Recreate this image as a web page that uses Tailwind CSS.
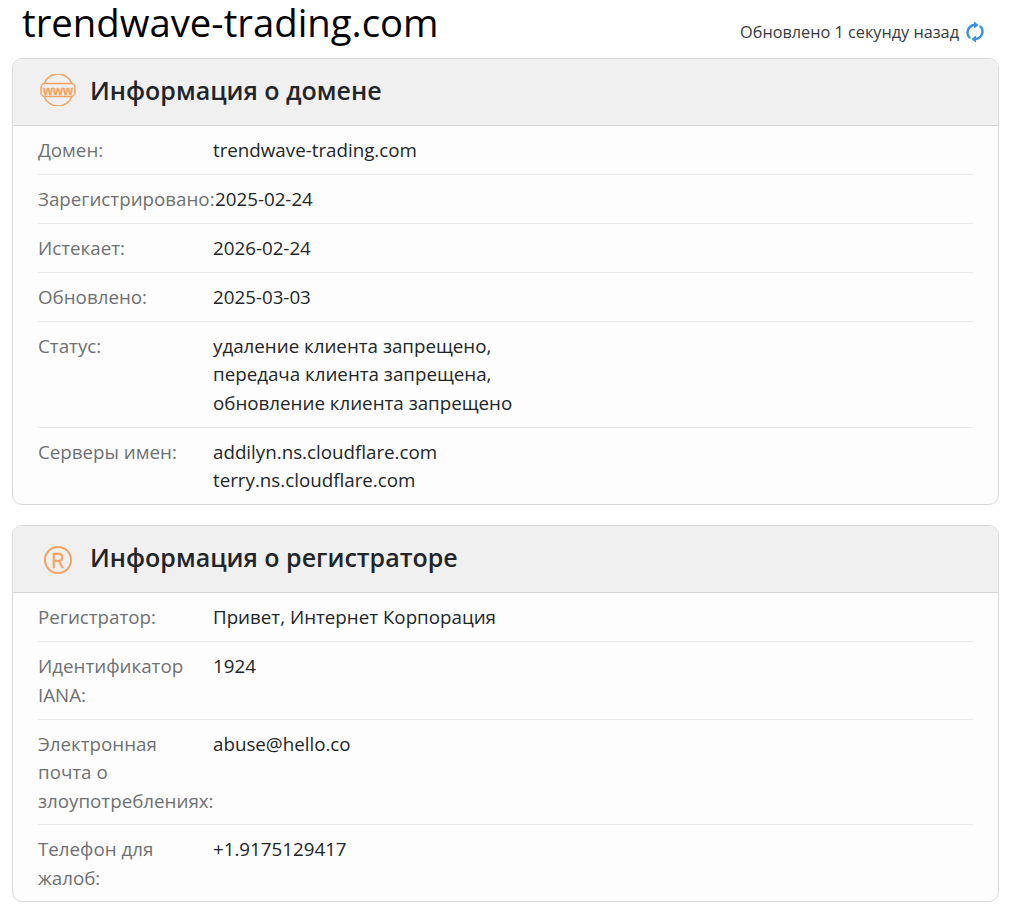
<!DOCTYPE html>
<html lang="ru">
<head>
    <meta charset="UTF-8">
    <meta name="viewport" content="width=device-width, initial-scale=1.0">
    <title>trendwave-trading.com</title>
    <script src="https://cdn.jsdelivr.net/npm/@tailwindcss/browser@4"></script>
</head>
<body class="bg-white text-[#212529] font-['Open_Sans','Noto_Sans',sans-serif] overflow-hidden">
    <div class="pl-3 pr-[10px]">
        <!-- Заголовок -->
        <div class="flex items-end justify-between h-[58px] pb-[14px]">
            <h1 class="pl-[10px] text-[38.3px] leading-[44px] text-black font-normal">trendwave-trading.com</h1>
            <div class="flex items-center gap-[5px] pr-[13px] text-[16.25px] leading-6 text-[#343a40]">
                <span>Обновлено 1 секунду назад</span>
                <svg class="w-[22px] h-[22px] text-[#3d8fe0]" viewBox="0 0 22 22" fill="none" stroke="currentColor" stroke-width="2.400" stroke-linecap="round" stroke-linejoin="round">
                    <path d="M11 4a7.500 7.500 0 0 0-5.500 12.500"/>
                    <path d="M11 18a7.500 7.500 0 0 0 5.500-12.500"/>
                    <path d="M10.500 1.500l3 2.500-3 2.500z" fill="currentColor" stroke-width="1.200"/>
                    <path d="M11.500 20.500l-3-2.500 3-2.500z" fill="currentColor" stroke-width="1.200"/>
                </svg>
            </div>
        </div>

        <!-- Информация о домене -->
        <section class="border border-[#d9d9d9] rounded-[10px] bg-[#fdfdfd] overflow-hidden">
            <div class="flex items-center h-[67px] bg-[#f0f0f0] border-b border-[#d4d4d4]">
                <svg class="w-[36px] h-[32px] ml-[27px] mb-[5px] text-[#f4a261]" viewBox="0 0 36 32" fill="none" stroke="currentColor" stroke-width="1.500">
                    <path d="M4 9.500a15 15 0 0 1 28 0"/>
                    <path d="M4 22.500a15 15 0 0 0 28 0"/>
                    <rect x="1" y="9.500" width="34" height="13" rx="4"/>
                    <text x="18" y="20.500" text-anchor="middle" font-family="Liberation Sans" font-weight="700" font-size="13" textLength="30" lengthAdjust="spacingAndGlyphs" fill="currentColor" stroke="currentColor" stroke-width="0.300">www</text>
                </svg>
                <h2 class="ml-[14px] mb-[5px] text-[25px] leading-8 font-semibold text-[#212529]">Информация о домене</h2>
            </div>
            <div class="px-[25px]">
                <div class="flex border-b border-[#e8e8e8] pt-[10px] pb-[9.5px] text-[18.75px] leading-[28.5px]">
                    <div class="w-[175px] shrink-0 text-[#6e7073]">Домен:</div>
                    <div>trendwave-trading.com</div>
                </div>
                <div class="flex border-b border-[#e8e8e8] pt-[10px] pb-[9.5px] text-[18.75px] leading-[28.5px]">
                    <div class="w-[177px] shrink-0 text-[#6e7073]">Зарегистрировано:</div>
                    <div>2025-02-24</div>
                </div>
                <div class="flex border-b border-[#e8e8e8] pt-[10px] pb-[9.5px] text-[18.75px] leading-[28.5px]">
                    <div class="w-[175px] shrink-0 text-[#6e7073]">Истекает:</div>
                    <div>2026-02-24</div>
                </div>
                <div class="flex border-b border-[#e8e8e8] pt-[10px] pb-[9.5px] text-[18.75px] leading-[28.5px]">
                    <div class="w-[175px] shrink-0 text-[#6e7073]">Обновлено:</div>
                    <div>2025-03-03</div>
                </div>
                <div class="flex border-b border-[#e8e8e8] pt-[9.8px] pb-[9.71px] text-[18.75px] leading-[28.5px]">
                    <div class="w-[175px] shrink-0 text-[#6e7073]">Статус:</div>
                    <div>удаление клиента запрещено,<br>передача клиента запрещена,<br>обновление клиента запрещено</div>
                </div>
                <div class="flex pt-[10px] pb-[10px] text-[18.75px] leading-[28px]">
                    <div class="w-[175px] shrink-0 text-[#6e7073]">Серверы имен:</div>
                    <div>addilyn.ns.cloudflare.com<br>terry.ns.cloudflare.com</div>
                </div>
            </div>
        </section>

        <!-- Информация о регистраторе -->
        <section class="mt-[20px] border border-[#d9d9d9] rounded-[10px] bg-[#fdfdfd] overflow-hidden">
            <div class="flex items-center h-[67px] bg-[#f0f0f0] border-b border-[#d4d4d4]">
                <svg class="w-[30px] h-[30px] ml-[30px] mt-[2px] text-[#f4a261]" viewBox="0 0 30 30" fill="none" stroke="currentColor" stroke-width="2">
                    <circle cx="15" cy="15" r="13"/>
                    <text x="15" y="23" text-anchor="middle" font-family="Liberation Sans" font-size="22" textLength="13" lengthAdjust="spacingAndGlyphs" fill="currentColor" stroke="currentColor" stroke-width="0.400">R</text>
                </svg>
                <h2 class="ml-[17px] mb-[5px] text-[25px] leading-8 font-semibold text-[#212529]">Информация о регистраторе</h2>
            </div>
            <div class="px-[25px]">
                <div class="flex border-b border-[#e8e8e8] pt-[10px] pb-[9.5px] text-[18.75px] leading-[28.5px]">
                    <div class="w-[175px] shrink-0 text-[#6e7073]">Регистратор:</div>
                    <div>Привет, Интернет Корпорация</div>
                </div>
                <div class="flex border-b border-[#e8e8e8] pt-[10px] pb-[9.5px] text-[18.75px] leading-[28.5px]">
                    <div class="w-[175px] shrink-0 text-[#6e7073]">Идентификатор IANA:</div>
                    <div>1924</div>
                </div>
                <div class="flex border-b border-[#e8e8e8] pt-[10px] pb-[9px] text-[18.75px] leading-[28.5px]">
                    <div class="w-[175px] shrink-0 text-[#6e7073]">Электронная почта о злоупотреблениях:</div>
                    <div>abuse@hello.co</div>
                </div>
                <div class="flex pt-[10px] pb-[9px] text-[18.75px] leading-[28.5px]">
                    <div class="w-[175px] shrink-0 text-[#6e7073]">Телефон для жалоб:</div>
                    <div>+1.9175129417</div>
                </div>
            </div>
        </section>
    </div>
</body>
</html>
